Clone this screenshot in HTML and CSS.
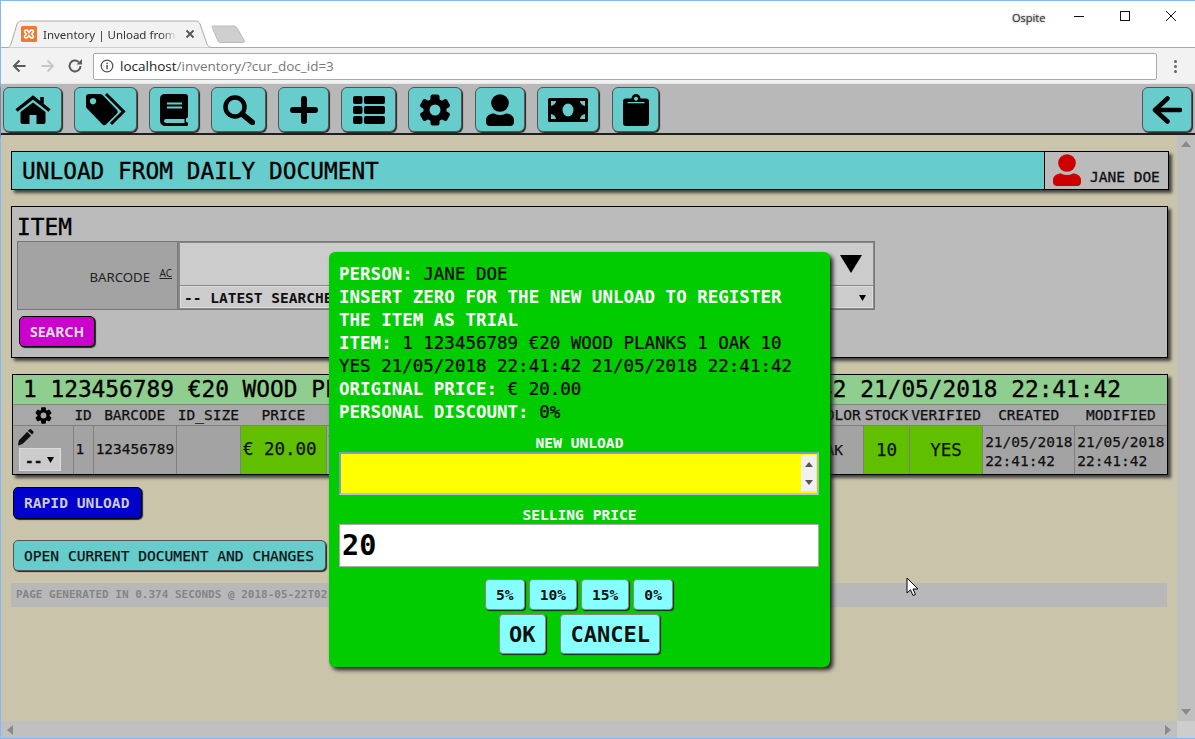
FILE: index.html
```html
<!DOCTYPE html>
<html lang="en">
<head>
  <meta charset="UTF-8" />
  <title>Inventory | Unload from daily document</title>
  <link rel="stylesheet" href="styles.css">
</head>
<body>
  <svg class="defs" width="0" height="0">
    <symbol id="i-gear" viewBox="0 0 32 32">
      <g>
        <rect x="11.5" y="0.5" width="9" height="31" rx="2" />
        <rect x="11.5" y="0.5" width="9" height="31" rx="2" transform="rotate(60 16 16)" />
        <rect x="11.5" y="0.5" width="9" height="31" rx="2" transform="rotate(120 16 16)" />
        <circle cx="16" cy="16" r="11.5" />
      </g>
      <circle class="hole" cx="16" cy="16" r="5.5" />
    </symbol>
    <symbol id="i-user" viewBox="0 0 28 32">
      <circle cx="14" cy="9" r="8.8" />
      <path d="M0 28 V26 C0 22 4 19.500 8 19.500 C10 20.500 12 21 14 21 C16 21 18 20.500 20 19.500 C24 19.500 28 22 28 26 V28 C28 30.500 26.500 32 24 32 H4 C1.500 32 0 30.500 0 28 Z" />
    </symbol>
  </svg>

  <div class="window">
    <div class="titlebar">
      <div class="tab">
        <svg class="tab-shape" width="206" height="28" viewBox="0 0 206 28">
          <path d="M0 27.500 H1 C3 27.500 4 26 5 24 L11 4 C12 2 13 1 15 1 H189 C192 1 193 2 194 4 L201 24 C202 26 203 27.500 206 27.500" fill="#f2f2f2" stroke="#aaa" />
        </svg>
        <svg class="favicon" width="16" height="16" viewBox="0 0 16 16">
          <rect width="16" height="16" rx="1.500" fill="#ee7a2a" />
          <path d="M4 4.500 C6 3 7 5 8 6.500 C9 5 10 3 12 4.500 C13.500 6 11 7 10.500 8 C11 9 13.500 10 12 11.500 C10 13 9 11 8 9.500 C7 11 6 13 4 11.500 C2.500 10 5 9 5.500 8 C5 7 2.500 6 4 4.500 Z" fill="none" stroke="#fff" stroke-width="1.600" />
        </svg>
        <span class="tab-title">Inventory | Unload from c</span>
        <svg class="tab-close" width="10" height="10" viewBox="0 0 10 10">
          <path d="M1.500 1.500 L8.500 8.500 M8.500 1.500 L1.500 8.500" stroke="#555" stroke-width="1.800" />
        </svg>
      </div>
      <svg class="new-tab" width="35" height="19" viewBox="0 0 35 19">
        <path d="M2 1 H23 C24 1 25 1.500 26 3 L33 15 C34 17 33 17.500 32 17.500 H9 C8 17.500 7.500 17 7 16 L1 2 C1 1.500 1 1 2 1 Z" fill="#cfcfcf" stroke="#bbb" />
      </svg>
      <div class="user-name">Ospite</div>
      <div class="win-controls">
        <svg width="12" height="12" viewBox="0 0 12 12"><path d="M1 6.500 H11" stroke="#111" /></svg>
        <svg width="12" height="12" viewBox="0 0 12 12"><rect x="1.500" y="1.500" width="9" height="9" fill="none" stroke="#111" /></svg>
        <svg width="12" height="12" viewBox="0 0 12 12"><path d="M1 1 L11 11 M11 1 L1 11" stroke="#111" /></svg>
      </div>
    </div>

    <div class="toolbar">
      <svg width="16" height="16" viewBox="0 0 16 16"><path d="M14.500 8 H3 M8.500 2.500 L3 8 L8.500 13.500" fill="none" stroke="#5a5a5a" stroke-width="2" /></svg>
      <svg width="16" height="16" viewBox="0 0 16 16"><path d="M1.500 8 H13 M7.500 2.500 L13 8 L7.500 13.500" fill="none" stroke="#c8c8c8" stroke-width="2" /></svg>
      <svg class="reload" width="16" height="16" viewBox="0 0 16 16"><path d="M13.500 8 A5.500 5.500 0 1 1 11.700 3.900" fill="none" stroke="#5a5a5a" stroke-width="2" /><path d="M9.500 6.500 H15 V1 Z" fill="#5a5a5a" /></svg>
      <div class="omnibox">
        <svg width="14" height="14" viewBox="0 0 14 14"><circle cx="7" cy="7" r="5.800" fill="none" stroke="#555" stroke-width="1.300" /><rect x="6.300" y="6" width="1.500" height="4.300" fill="#555" /><rect x="6.300" y="3.700" width="1.500" height="1.500" fill="#555" /></svg>
        <span class="host">localhost</span><span class="path">/inventory/?cur_doc_id=3</span>
      </div>
      <div class="menu-dots"><i></i><i></i><i></i></div>
    </div>

    <nav class="nav">
      <a class="nav-btn nav-home">
        <svg width="36" height="29" viewBox="0 0 36 29">
          <path d="M1.500 15.500 L18 2.500 L34.500 15.500 M27 2 V9" fill="none" stroke="#000" stroke-width="3.500" />
          <path d="M5.500 17 L18 7.500 L30.500 17 V27 Q30.500 29 28.500 29 H21.500 V20 H14.500 V29 H7.500 Q5.500 29 5.500 27 Z" />
        </svg>
      </a>
      <a class="nav-btn nav-tags">
        <svg width="42" height="33" viewBox="0 0 42 33">
          <path fill-rule="evenodd" d="M1 4 Q1 1 4 1 H15 Q16.500 1 17.500 2 L32 17 Q33.500 19 32 20.500 L21 31.500 Q19 33 17.500 31.500 L2 15.500 Q1 14.500 1 13 Z M8 5 A3.200 3.200 0 1 0 8.010 5 Z" />
          <path d="M21 1 L38.500 18.500 L26 31" fill="none" stroke="#000" stroke-width="3" />
        </svg>
      </a>
      <a class="nav-btn nav-book">
        <svg width="28" height="32" viewBox="0 0 28 32">
          <path d="M5 0 H25 Q28 0 28 3 V22 Q28 24 26 24.500 V28 H27 Q28 28 28 29.500 V30.500 Q28 32 27 32 H6 Q0 32 0 26 V5 Q0 0 5 0 Z" />
          <rect x="7" y="8.500" width="15" height="2" fill="#66cccc" />
          <rect x="7" y="12.500" width="15" height="2" fill="#66cccc" />
          <path d="M4 27 Q4 25 6 25 H24.500 V29 H6 Q4 29 4 27 Z" fill="#66cccc" />
        </svg>
      </a>
      <a class="nav-btn nav-search">
        <svg width="32" height="30" viewBox="0 0 32 30">
          <circle cx="12" cy="12" r="9.500" fill="none" stroke="#000" stroke-width="4.500" />
          <path d="M19 19 L29.500 27.500" stroke="#000" stroke-width="5.500" stroke-linecap="round" />
        </svg>
      </a>
      <a class="nav-btn nav-plus">
        <svg width="28" height="28" viewBox="0 0 28 28">
          <path d="M14 3 V25 M3 14 H25" stroke="#000" stroke-width="6" stroke-linecap="round" />
        </svg>
      </a>
      <a class="nav-btn nav-list">
        <svg width="32" height="28" viewBox="0 0 32 28">
          <rect y="0" width="9.500" height="8" rx="2" /><rect x="11" y="0" width="21" height="8" rx="2" />
          <rect y="10" width="9.500" height="8" rx="2" /><rect x="11" y="10" width="21" height="8" rx="2" />
          <rect y="20" width="9.500" height="8" rx="2" /><rect x="11" y="20" width="21" height="8" rx="2" />
        </svg>
      </a>
      <a class="nav-btn nav-gear"><svg class="gear" width="32" height="32"><use href="#i-gear" /></svg></a>
      <a class="nav-btn nav-user"><svg width="28" height="32"><use href="#i-user" /></svg></a>
      <a class="nav-btn nav-money">
        <svg width="40" height="24" viewBox="0 0 40 24">
          <rect width="40" height="24" rx="1.500" />
          <ellipse cx="20" cy="12" rx="5.500" ry="6.500" fill="#66cccc" />
          <path d="M3 8 V3 H8 Q7.500 7 3 8 Z M37 8 V3 H32 Q32.500 7 37 8 Z M3 16 V21 H8 Q7.500 17 3 16 Z M37 16 V21 H32 Q32.500 17 37 16 Z" fill="#66cccc" />
        </svg>
      </a>
      <a class="nav-btn nav-clip">
        <svg width="26" height="32" viewBox="0 0 26 32">
          <path fill-rule="evenodd" d="M3 4.500 H8.500 A4.500 4.500 0 0 1 17.500 4.500 H23 Q26 4.500 26 7.500 V29 Q26 32 23 32 H3 Q0 32 0 29 V7.500 Q0 4.500 3 4.500 Z M13 2.700 A2 2 0 1 0 13.010 2.700 Z" />
          <rect x="4.500" y="8" width="17" height="1.300" fill="#66cccc" />
        </svg>
      </a>
      <a class="nav-btn nav-back">
        <svg width="30" height="28" viewBox="0 0 30 28">
          <path d="M15.500 2.500 L3 14 L15.500 25.500 M3 14 H28" fill="none" stroke="#000" stroke-width="4.500" stroke-linecap="round" stroke-linejoin="round" />
        </svg>
      </a>
    </nav>

    <div class="viewport">
      <div class="viewport-row">
        <main class="page">
          <header class="page-title">
            <h1>UNLOAD FROM DAILY DOCUMENT</h1>
            <div class="person">
              <svg width="28" height="32"><use href="#i-user" /></svg>
              <span>JANE DOE</span>
            </div>
          </header>

          <section class="item-panel">
            <h2>ITEM</h2>
            <div class="search-box">
              <div class="search-label">BARCODE <sup>AC</sup></div>
              <div class="search-fields">
                <div class="search-top">
                  <div class="search-input"></div>
                  <div class="search-arrow"><svg width="24" height="20" viewBox="0 0 24 20"><path d="M1 1 H23 L12 19 Z" /></svg></div>
                </div>
                <div class="search-select">
                  <span>-- LATEST SEARCHES --</span>
                  <svg width="7" height="6" viewBox="0 0 7 6"><path d="M0 0 H7 L3.500 6 Z" /></svg>
                </div>
              </div>
            </div>
            <a class="btn btn-search">SEARCH</a>
          </section>

          <section class="result">
            <div class="result-title">1 123456789 €20 WOOD PLANKS 1 OAK 10 YES 21/05/2018 22:41:42 21/05/2018 22:41:42</div>
            <table class="result-table">
              <colgroup>
                <col class="c-act"><col class="c-id"><col class="c-barcode"><col class="c-idsize"><col class="c-price"><col class="c-cat"><col class="c-size"><col class="c-color"><col class="c-stock"><col class="c-verified"><col class="c-date"><col class="c-date">
              </colgroup>
              <thead>
                <tr>
                  <th><svg class="gear gear-small" width="17" height="17"><use href="#i-gear" /></svg></th>
                  <th>ID</th><th>BARCODE</th><th>ID_SIZE</th><th>PRICE</th><th>CATEGORY</th><th>SIZE</th><th>COLOR</th><th>STOCK</th><th>VERIFIED</th><th>CREATED</th><th>MODIFIED</th>
                </tr>
              </thead>
              <tbody>
                <tr>
                  <td class="act">
                    <svg class="pencil" width="17" height="17" viewBox="0 0 17 17">
                      <path d="M11.500 1 L13.500 0 Q14 0 16 2 Q17 3 16.500 4 L15 5.500 L11 2 Z M10.200 2.800 L14 6.700 L5.500 15 L1 16.500 L1.800 11.500 Z" fill="#111" />
                    </svg>
                    <div class="mini-select"><span>--</span><svg width="7" height="6" viewBox="0 0 7 6"><path d="M0 0 H7 L3.500 6 Z" /></svg></div>
                  </td>
                  <td class="raised">1</td>
                  <td class="raised">123456789</td>
                  <td></td>
                  <td class="ok left raised">€ 20.00</td>
                  <td>WOOD PLANKS</td>
                  <td>1</td>
                  <td>OAK</td>
                  <td class="ok center">10</td>
                  <td class="ok center">YES</td>
                  <td class="date">21/05/2018<br>22:41:42</td>
                  <td class="date">21/05/2018<br>22:41:42</td>
                </tr>
              </tbody>
            </table>
          </section>

          <a class="btn btn-rapid">RAPID UNLOAD</a>
          <a class="btn btn-open">OPEN CURRENT DOCUMENT AND CHANGES</a>
          <footer class="generated">PAGE GENERATED IN 0.374 SECONDS @ 2018-05-22T02:41:44+02:00</footer>
        </main>
        <div class="vscroll">
          <svg width="10" height="6" viewBox="0 0 10 6"><path d="M0 6 H10 L5 0 Z" /></svg>
          <svg width="10" height="6" viewBox="0 0 10 6"><path d="M0 0 H10 L5 6 Z" /></svg>
        </div>
      </div>
      <div class="hscroll">
        <div class="hscroll-track">
          <svg width="6" height="10" viewBox="0 0 6 10"><path d="M6 0 V10 L0 5 Z" /></svg>
          <svg width="6" height="10" viewBox="0 0 6 10"><path d="M0 0 V10 L6 5 Z" /></svg>
        </div>
        <div class="hscroll-corner"></div>
      </div>

      <!-- unload dialog -->
      <div class="modal">
        <p class="modal-text">
          <b>PERSON:</b> JANE DOE<br>
          <b>INSERT ZERO FOR THE NEW UNLOAD TO REGISTER<br>THE ITEM AS TRIAL</b><br>
          <b>ITEM:</b> 1 123456789 €20 WOOD PLANKS 1 OAK 10<br>
          YES 21/05/2018 22:41:42 21/05/2018 22:41:42<br>
          <b>ORIGINAL PRICE:</b> € 20.00<br>
          <b>PERSONAL DISCOUNT:</b> 0%
        </p>
        <label class="field-label">NEW UNLOAD</label>
        <div class="field field-unload">
          <div class="spin">
            <svg width="8" height="5" viewBox="0 0 8 5"><path d="M0 5 H8 L4 0 Z" /></svg>
            <svg width="8" height="5" viewBox="0 0 8 5"><path d="M0 0 H8 L4 5 Z" /></svg>
          </div>
        </div>
        <label class="field-label label-price">SELLING PRICE</label>
        <div class="field field-price">20</div>
        <div class="discounts">
          <a class="cyan-btn">5%</a><a class="cyan-btn">10%</a><a class="cyan-btn">15%</a><a class="cyan-btn">0%</a>
        </div>
        <div class="modal-actions">
          <a class="cyan-btn big">OK</a><a class="cyan-btn big">CANCEL</a>
        </div>
      </div>

      <svg class="cursor" width="14" height="20" viewBox="0 0 14 20">
        <path d="M1 1 V16 L4.500 12.800 L7 18.500 L9.500 17.500 L7 12 H12 Z" fill="#fff" stroke="#000" />
      </svg>
    </div>
  </div>
</body>
</html>
```

FILE: styles.css
```css
html, body {
  margin: 0;
  padding: 0;
  width: 100%;
  height: 100%;
  overflow: hidden;
  background: #fff;
  font-family: 'DejaVu Sans Mono', monospace;
}

.defs {
  position: absolute;
}

.window {
  height: 739px;
  box-sizing: border-box;
  border-top: 1px solid #80bbf5;
  border-left: 1px solid #80bbf5;
  border-bottom: 1px solid #80bbf5;
  display: flex;
  flex-direction: column;
}

/* browser chrome */
.titlebar {
  height: 46px;
  flex: none;
  display: flex;
  align-items: flex-end;
  padding-left: 5px;
  background: #fff;
  position: relative;
}

.tab {
  position: relative;
  width: 206px;
  height: 28px;
  display: flex;
  align-items: center;
  padding-left: 15px;
  box-sizing: border-box;
  margin-bottom: -1px;
  z-index: 1;
}

.tab-shape {
  position: absolute;
  left: 0;
  top: 0;
}

.favicon {
  position: relative;
  flex: none;
}

.tab-title {
  position: relative;
  width: 134px;
  margin-left: 6px;
  font: 11.5px 'Noto Sans', sans-serif;
  color: #333;
  white-space: nowrap;
  overflow: hidden;
  -webkit-mask-image: linear-gradient(to right, #000 88%, transparent);
  mask-image: linear-gradient(to right, #000 88%, transparent);
}

.tab-close {
  position: relative;
  margin-left: 8px;
}

.new-tab {
  margin: 0 0 3px -1px;
}

.user-name {
  position: absolute;
  top: 9px;
  left: 1011px;
  font: 11px 'Open Sans', sans-serif;
  color: #333;
  text-shadow: 0 0 2px #777;
}

.win-controls {
  position: absolute;
  top: 9px;
  right: 18px;
  display: flex;
  gap: 34px;
}

.toolbar {
  height: 37px;
  flex: none;
  box-sizing: border-box;
  border-top: 1px solid #aaa;
  background: #f2f2f2;
  display: flex;
  align-items: center;
  padding-left: 10px;
  gap: 13px;
}

.reload {
  margin-left: -2px;
}

.omnibox {
  width: 1064px;
  height: 27px;
  margin-left: -3px;
  box-sizing: border-box;
  border: 1px solid #aaa;
  border-radius: 2px;
  background: #fff;
  display: flex;
  align-items: center;
  padding-left: 6px;
  font: 13.5px 'Open Sans', sans-serif;
}

.omnibox svg {
  margin-right: 6px;
}

.host {
  color: #222;
}

.path {
  color: #777;
}

.menu-dots {
  margin-left: 4px;
  display: flex;
  flex-direction: column;
  gap: 2px;
}

.menu-dots i {
  width: 3px;
  height: 3px;
  background: #666;
  border-radius: 50%;
}

/* app nav */
.nav {
  height: 51px;
  flex: none;
  box-sizing: border-box;
  background: #b8b8b8;
  padding: 3px 3px 0 2px;
  display: flex;
  gap: 12px;
  border-bottom: 2px solid #1f1f1f;
  box-shadow: 0 2px 3px #444;
  position: relative;
}

.nav-btn {
  height: 45px;
  box-sizing: border-box;
  display: flex;
  align-items: center;
  justify-content: center;
  background: #66cccc;
  border: 1px solid #555;
  border-radius: 6px;
  box-shadow: 1px 1px 1px #222;
  --hole: #66cccc;
}

.nav-home { width: 59px; }
.nav-tags { width: 63px; }
.nav-book { width: 50px; }
.nav-search { width: 55px; }
.nav-plus { width: 51px; }
.nav-list { width: 55px; }
.nav-gear { width: 54px; }
.nav-user { width: 50px; margin-left: 1px; }
.nav-money { width: 62px; }
.nav-clip { width: 47px; margin-left: 1px; }
.nav-back { width: 50px; margin-left: auto; }

.hole {
  fill: var(--hole);
}

/* page */
.viewport {
  flex: 1;
  min-height: 0;
  position: relative;
  display: flex;
  flex-direction: column;
}

.viewport-row {
  flex: 1;
  min-height: 0;
  display: flex;
}

.page {
  flex: 1;
  min-width: 0;
  background: #c9c4aa;
  padding: 16px 8px 0 10px;
  overflow: hidden;
}

.vscroll {
  width: 18px;
  flex: none;
  background: #c0c0c0;
  display: flex;
  flex-direction: column;
  justify-content: space-between;
  align-items: center;
  padding: 6px 0;
  box-sizing: border-box;
}

.vscroll svg, .hscroll svg {
  fill: #8a8a8a;
}

.hscroll {
  height: 17px;
  flex: none;
  display: flex;
}

.hscroll-track {
  flex: 1;
  background: #c0c0c0;
  display: flex;
  justify-content: space-between;
  align-items: center;
  padding: 0 6px;
}

.hscroll-corner {
  width: 18px;
  background: #cdcdcd;
}

.page-title {
  height: 39px;
  box-sizing: border-box;
  border: 1px solid #000;
  background: #66cccc;
  display: flex;
  box-shadow: 3px 3px 3px #444;
}

.page-title h1 {
  flex: 1;
  margin: 0;
  padding: 1px 0 0 10px;
  font-size: 22.8px;
  font-weight: normal;
  line-height: 37px;
  color: #000;
  -webkit-text-stroke: 0.35px #000;
}

.person {
  width: 124px;
  box-sizing: border-box;
  border-left: 1px solid #000;
  background: #bbb;
  display: flex;
  align-items: flex-end;
  padding: 0 0 2px 8px;
  gap: 9px;
  color: #111;
  font-size: 14.5px;
  line-height: 20px;
  -webkit-text-stroke: 0.35px #111;
}

.person svg {
  fill: #cc0000;
  flex: none;
  margin-bottom: 1px;
}

.item-panel {
  margin-top: 16px;
  margin-right: 1px;
  height: 152px;
  box-sizing: border-box;
  border: 1px solid #000;
  background: #bbb;
  box-shadow: 3px 3px 3px #444;
  padding: 6px 5px 0;
}

.item-panel h2 {
  margin: 0;
  font-size: 22.8px;
  font-weight: normal;
  line-height: 28px;
  color: #000;
  -webkit-text-stroke: 0.35px #000;
}

.search-box {
  width: 858px;
  height: 69px;
  box-sizing: border-box;
  border: 1px solid #777;
  display: flex;
}

.search-label {
  width: 160px;
  box-sizing: border-box;
  background: #a3a3a3;
  border-right: 1px solid #777;
  padding: 26px 5px 0 0;
  text-align: right;
  font: 13.2px 'Noto Sans', sans-serif;
  color: #222;
}

.search-label sup {
  font-size: 10px;
  text-decoration: underline;
  margin-left: 6px;
  line-height: 0;
}

.search-fields {
  flex: 1;
  padding: 1px 1px 1px 2px;
  display: flex;
  flex-direction: column;
  gap: 1px;
  background: #888;
}

.search-top {
  height: 42px;
  display: flex;
}

.search-input {
  flex: 1;
  background: #ccc;
}

.search-arrow {
  width: 45px;
  background: #ccc;
  display: flex;
  align-items: center;
  justify-content: center;
}

.search-select {
  flex: 1;
  background: #ccc;
  border: 1px solid #ddd;
  display: flex;
  align-items: center;
  justify-content: space-between;
  padding: 1px 6px 0 3px;
  font-size: 14.5px;
  font-weight: bold;
  color: #111;
}

.btn {
  display: block;
  box-sizing: border-box;
  width: fit-content;
  border-radius: 5px;
  border: 1px solid #000;
  box-shadow: 1px 1px 1px #222;
  line-height: 29px;
}

.btn-search {
  margin: 6px 0 0 2px;
  padding: 0 10px;
  height: 31px;
  background: #cc00cc;
  color: #ddd;
  font: bold 14px/29px 'Noto Sans', sans-serif;
}

.result {
  margin: 16px 1px 0 1px;
  border: 1px solid #000;
  box-shadow: 3px 3px 3px #444;
  background: #a3a3a3;
}

.result-title {
  height: 29px;
  line-height: 29px;
  padding-left: 10px;
  background: #8fce8f;
  font-size: 22.8px;
  color: #000;
  white-space: nowrap;
  overflow: hidden;
  -webkit-text-stroke: 0.35px #000;
}

.result-table {
  width: 100%;
  table-layout: fixed;
  border-collapse: collapse;
  font-size: 14.5px;
  color: #111;
  -webkit-text-stroke: 0.25px #111;
}

.c-act { width: 60px; }
.c-id { width: 20px; }
.c-barcode { width: 83px; }
.c-idsize { width: 64px; }
.c-price { width: 86px; }
.c-cat { width: 74px; }
.c-size { width: 413px; }
.c-color { width: 49px; }
.c-stock { width: 46px; }
.c-verified { width: 73px; }
.c-date { width: 92px; }

.result-table th {
  height: 20px;
  padding: 0;
  font-weight: normal;
  text-align: center;
  background: #a8a8a8;
  border-top: 1px solid #808080;
  border-bottom: 1px solid #808080;
  --hole: #a8a8a8;
  white-space: nowrap;
}

.gear-small {
  display: block;
  margin: 0 auto;
}

.result-table td {
  height: 45px;
  padding: 0 0 0 2px;
  border-left: 1px solid #808080;
  line-height: 19px;
  white-space: normal;
}

.result-table td:first-child {
  border-left: 0;
}

.result-table td.raised {
  padding-bottom: 1px;
}

.result-table td.date {
  padding-top: 3px;
}

.result-table td.ok {
  background: #60c000;
  color: #111;
  font-size: 17.5px;
}

.result-table td.center {
  text-align: center;
  padding: 0;
}

.act {
  vertical-align: top;
}

.pencil {
  display: block;
  margin: 3px 0 0 2px;
}

.mini-select {
  width: 42px;
  height: 23px;
  margin: 2px 0 0 4px;
  box-sizing: border-box;
  background: #ccc;
  border: 1px solid #ddd;
  display: flex;
  justify-content: space-between;
  align-items: flex-start;
  padding: 3px 6px 0 5px;
  font-weight: bold;
  line-height: 18px;
}

.mini-select svg {
  margin-top: 5px;
}

.btn-rapid {
  margin: 12px 0 0 2px;
  height: 32px;
  width: 129px;
  padding: 0 10px;
  background: #0000cc;
  color: #ccc;
  font-size: 14.6px;
  font-weight: bold;
  line-height: 30px;
  white-space: nowrap;
}

.btn-open {
  margin: 21px 0 0 2px;
  height: 31px;
  width: 313px;
  padding: 0 10px;
  background: #66cccc;
  border-color: #555;
  color: #111;
  font-size: 14.6px;
  white-space: nowrap;
  -webkit-text-stroke: 0.25px #111;
}

.generated {
  margin: 12px 2px 0 0;
  height: 24px;
  padding-left: 5px;
  background: #b8b8b8;
  color: #858585;
  font-size: 11px;
  font-weight: bold;
  line-height: 24px;
}

/* unload dialog */
.modal {
  position: absolute;
  left: 328px;
  top: 117px;
  width: 501px;
  height: 415px;
  box-sizing: border-box;
  padding: 11px 10px 0;
  background: #00cc00;
  border-radius: 6px;
  box-shadow: 3px 3px 4px #222;
}

.modal-text {
  margin: 0;
  font-size: 17.5px;
  line-height: 23px;
  color: #000;
  white-space: nowrap;
  -webkit-text-stroke: 0.2px #000;
}

.modal-text b {
  color: #fff;
  -webkit-text-stroke: 0;
}

.field-label {
  display: block;
  margin-top: 10px;
  text-align: center;
  color: #fff;
  font-size: 14.6px;
  font-weight: bold;
  line-height: 18px;
}

.label-price {
  margin-top: 11px;
}

.field {
  box-sizing: border-box;
  width: 480px;
  height: 43px;
}

.field-unload {
  background: #ffff00;
  border: 2px solid;
  border-color: #7d9dc9 #9fb4d6 #b5c3e0 #7d9dc9;
  display: flex;
  justify-content: flex-end;
  padding: 1px 1px 2px 0;
}

.spin {
  width: 15px;
  background: #f0f0f0;
  display: flex;
  flex-direction: column;
  justify-content: space-around;
  align-items: center;
}

.spin svg {
  fill: #555;
}

.field-price {
  background: #fff;
  border: 1px solid #aaa;
  padding-left: 2px;
  font-size: 28.5px;
  font-weight: bold;
  line-height: 41px;
  color: #000;
}

.discounts, .modal-actions {
  display: flex;
  justify-content: center;
}

.discounts {
  gap: 4px;
  margin-top: 12px;
  padding-right: 1px;
}

.modal-actions {
  gap: 14px;
  margin-top: 4px;
}

.cyan-btn {
  box-sizing: border-box;
  height: 31px;
  padding: 0 10px;
  background: #88ffff;
  border: 1px solid #888;
  border-radius: 4px;
  box-shadow: 1px 1px 1px #222;
  color: #111;
  font-size: 14.6px;
  font-weight: bold;
  line-height: 29px;
}

.cyan-btn.big {
  height: 40px;
  padding: 1px 9.5px 0;
  font-size: 22px;
  line-height: 38px;
}

.cursor {
  position: absolute;
  left: 905px;
  top: 442px;
}
```
